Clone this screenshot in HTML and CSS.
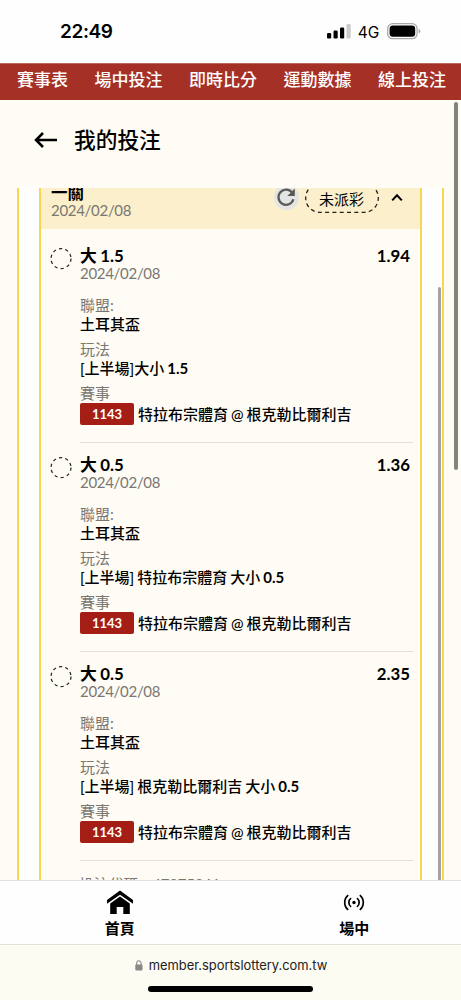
FILE: index.html
```html
<!DOCTYPE html>
<html lang="zh-Hant">
<head>
    <meta charset="UTF-8">
    <meta name="viewport" content="width=device-width, initial-scale=1.0">
    <title>我的投注</title>
    <link rel="stylesheet" href="styles.css">
</head>
<body>
    <div class="status-bar">
        <span class="time">22:49</span>
        <div class="status-icons">
            <svg class="signal" width="24" height="15" viewBox="0 0 24 15">
                <rect x="0" y="9" width="4.2" height="5.5" rx="1.2"/>
                <rect x="6.5" y="6.5" width="4.2" height="8" rx="1.2"/>
                <rect x="13" y="3.5" width="4.2" height="11" rx="1.2"/>
                <rect x="19.5" y="0" width="4.2" height="14.5" rx="1.2" fill="#ccc"/>
            </svg>
            <span class="network">4G</span>
            <svg class="battery" width="34" height="17" viewBox="0 0 34 17">
                <rect x="0.7" y="0.7" width="29.4" height="15" rx="5" fill="none" stroke="#a8a8a8" stroke-width="1.3"/>
                <rect x="2.6" y="2.6" width="25.6" height="11.2" rx="3.3"/>
                <path d="M31.7 5.8q1.6.6 1.6 2.4t-1.6 2.4z" fill="#a8a8a8"/>
            </svg>
        </div>
    </div>

    <nav class="top-nav">
        <a>賽事表</a>
        <a>場中投注</a>
        <a>即時比分</a>
        <a>運動數據</a>
        <a>線上投注</a>
    </nav>

    <div class="page">
        <div class="page-header">
            <svg width="24" height="18" viewBox="0 0 24 18" fill="none" stroke="#000" stroke-width="2.5">
                <path d="M23 9H2.5M9 2L2 9L9 16"/>
            </svg>
            <h1>我的投注</h1>
        </div>

        <div class="list">
            <div class="ticket">
                <div class="ticket-header">
                    <div class="ticket-info">
                        <div class="ticket-type">一關</div>
                        <div class="date">2024/02/08</div>
                    </div>
                    <span class="refresh">
                        <svg width="18" height="18" viewBox="0 0 18 18" fill="none" stroke="#5a5955" stroke-width="2.3">
                            <path d="M15.6 5.2A7.6 7.6 0 1 0 16.4 11.3"/>
                            <path d="M17.8 0.6V8H10.4z" fill="#5a5955" stroke="none"/>
                        </svg>
                    </span>
                    <span class="state">
                        <svg width="74" height="30" viewBox="0 0 74 30" fill="none" stroke="#222" stroke-width="1.3" stroke-dasharray="4 3.3">
                            <rect x="0.7" y="0.7" width="72.6" height="28.6" rx="14"/>
                        </svg>
                        <span class="state-text">未派彩</span>
                    </span>
                    <svg class="chevron" width="12" height="9" viewBox="0 0 12 9" fill="none" stroke="#000" stroke-width="2">
                        <path d="M1.2 7.4L6 2.2L10.8 7.4"/>
                    </svg>
                </div>

                <div class="bet">
                    <svg class="bet-mark" width="22" height="22" viewBox="0 0 22 22"><circle cx="11" cy="10.6" r="10"/></svg>
                    <div class="bet-body">
                        <div class="bet-title"><span>大 1.5</span><span>1.94</span></div>
                        <div class="date">2024/02/08</div>
                        <dl>
                            <dt>聯盟:</dt>
                            <dd>土耳其盃</dd>
                            <dt>玩法</dt>
                            <dd>[上半場]大小 <b>1.5</b></dd>
                            <dt>賽事</dt>
                            <dd class="match"><span class="badge">1143</span>特拉布宗體育 @ 根克勒比爾利吉</dd>
                        </dl>
                    </div>
                </div>

                <div class="bet">
                    <svg class="bet-mark" width="22" height="22" viewBox="0 0 22 22"><circle cx="11" cy="10.6" r="10"/></svg>
                    <div class="bet-body">
                        <div class="bet-title"><span>大 0.5</span><span>1.36</span></div>
                        <div class="date">2024/02/08</div>
                        <dl>
                            <dt>聯盟:</dt>
                            <dd>土耳其盃</dd>
                            <dt>玩法</dt>
                            <dd>[上半場] 特拉布宗體育 大小 <b>0.5</b></dd>
                            <dt>賽事</dt>
                            <dd class="match"><span class="badge">1143</span>特拉布宗體育 @ 根克勒比爾利吉</dd>
                        </dl>
                    </div>
                </div>

                <div class="bet">
                    <svg class="bet-mark" width="22" height="22" viewBox="0 0 22 22"><circle cx="11" cy="10.6" r="10"/></svg>
                    <div class="bet-body">
                        <div class="bet-title"><span>大 0.5</span><span>2.35</span></div>
                        <div class="date">2024/02/08</div>
                        <dl>
                            <dt>聯盟:</dt>
                            <dd>土耳其盃</dd>
                            <dt>玩法</dt>
                            <dd>[上半場] 根克勒比爾利吉 大小 <b>0.5</b></dd>
                            <dt>賽事</dt>
                            <dd class="match"><span class="badge">1143</span>特拉布宗體育 @ 根克勒比爾利吉</dd>
                        </dl>
                    </div>
                </div>

                <div class="bet-code"><span>投注代碼</span><span>47275361</span></div>
            </div>
            <div class="list-scroll"></div>
        </div>
        <div class="page-scroll"></div>
    </div>

    <div class="tab-bar">
        <a class="tab">
            <svg width="28" height="25" viewBox="0 0 28 25">
                <path d="M14 0.5L27 10V13.8L14 4.8L1 13.8V10z"/>
                <path d="M14 6.6L23.8 13.4V24H17.3V17H10.7V24H4.2V13.4z"/>
            </svg>
            <span>首頁</span>
        </a>
        <a class="tab">
            <svg width="22" height="25" viewBox="0 0 22 25" fill="none" stroke="#000" stroke-width="1.7">
                <circle cx="11" cy="12.5" r="1.7" fill="#000" stroke="none"/>
                <path d="M8.1 8.1a5.4 5.4 0 0 0 0 8.8M13.9 8.1a5.4 5.4 0 0 1 0 8.8"/>
                <path d="M5.2 5.1a9.6 9.6 0 0 0 0 14.8M16.8 5.1a9.6 9.6 0 0 1 0 14.8"/>
            </svg>
            <span>場中</span>
        </a>
    </div>

    <div class="browser-bar">
        <div class="address">
            <svg width="8" height="11" viewBox="0 0 8 11">
                <rect x="0.3" y="4.6" width="7.2" height="6" rx="1" fill="#888"/>
                <path d="M1.7 5V3.2a2.2 2.4 0 0 1 4.4 0V5" fill="none" stroke="#888" stroke-width="1.1"/>
            </svg>
            <span>member.sportslottery.com.tw</span>
        </div>
        <div class="home-indicator"></div>
    </div>
</body>
</html>
```
FILE: styles.css
```css
* {
    box-sizing: border-box;
}
body {
    margin: 0;
    height: 1000px;
    display: flex;
    flex-direction: column;
    overflow: hidden;
    font-family: Lato, "Noto Sans CJK TC", sans-serif;
    font-size: 15px;
    color: #000;
    background-color: #fffcf5;
}
svg {
    display: block;
    flex-shrink: 0;
}

/* phone status bar */
.status-bar {
    height: 63px;
    flex-shrink: 0;
    display: flex;
    justify-content: space-between;
    padding: 20px 40px 0 60px;
    background-color: #fefefe;
    font-family: Inter, sans-serif;
}
.time {
    font-size: 19px;
    font-weight: 600;
    line-height: 23px;
    letter-spacing: -0.4px;
}
.status-icons {
    display: flex;
    align-items: center;
    height: 22px;
}
.network {
    font-size: 15.5px;
    margin: 2px 8px 0 7px;
    letter-spacing: -0.2px;
}

.top-nav {
    height: 37px;
    flex-shrink: 0;
    display: flex;
    justify-content: space-between;
    padding: 0 15px 0 17px;
    border-top: 1px solid #b96a61;
    background-color: #a53126;
    color: #fff;
    font-size: 17px;
    font-weight: 500;
    line-height: 32px;
}

.page {
    position: relative;
    flex: 1;
    min-height: 0;
    display: flex;
    flex-direction: column;
}
.page-header {
    height: 88px;
    flex-shrink: 0;
    display: flex;
    align-items: center;
    gap: 16px;
    padding: 0 0 8px 34px;
}
.page-header h1 {
    margin: 0;
    font-size: 21.7px;
    font-weight: 500;
    line-height: 30px;
}

.list {
    position: relative;
    flex: 1;
    min-height: 0;
    overflow: hidden;
    margin: 0 17px;
    padding: 0 20px;
    border-left: 2px solid #f7d74f;
    border-right: 2px solid #f7d74f;
    background-color: #fefefe;
}
.ticket {
    height: 720px;
    border-left: 2px solid #f7d74f;
    border-right: 2px solid #f7d74f;
    background-color: #fffcf5;
}
.ticket-header {
    height: 45px;
    display: flex;
    align-items: flex-start;
    padding: 0 17px 0 10px;
    background: linear-gradient(#fbf0cb 41px, transparent 41px);
}
.ticket-info {
    flex: 1;
}
.ticket-type {
    height: 14px;
    font-size: 16.5px;
    font-weight: 700;
    line-height: 11px;
}
.date {
    height: 16px;
    font-size: 15px;
    line-height: 17px;
    letter-spacing: -0.3px;
    color: #797772;
}
.refresh {
    width: 25px;
    height: 25px;
    margin: -3px 6px 0 0;
    padding: 3px 3px;
    border-radius: 50%;
    background-color: #e4e4e4;
}
.state {
    position: relative;
    width: 74px;
    margin-top: -5px;
}
.state-text {
    position: absolute;
    inset: 0;
    text-align: center;
    text-indent: -1px;
    line-height: 32px;
}
.chevron {
    margin: 5px 0 0 12px;
}

.bet {
    height: 209px;
    display: flex;
    gap: 8px;
    padding: 14px 7px 0 9px;
}
.bet:nth-child(2) {
    margin-top: 1px;
}
.bet-mark {
    fill: none;
    stroke: #222;
    stroke-width: 1.2;
    stroke-dasharray: 3.2 3.2;
}
.bet-body {
    flex: 1;
    border-bottom: 1px solid #e3e1da;
}
.bet-title {
    height: 17px;
    display: flex;
    justify-content: space-between;
    padding-right: 3px;
    font-size: 16.8px;
    font-weight: 700;
    line-height: 16px;
    word-spacing: -0.5px;
}
.bet dl {
    margin: 15px 0 0;
}
.bet dt, .bet dd {
    margin: 0;
    white-space: nowrap;
}
.bet dt {
    height: 19px;
    line-height: 18px;
    color: #797772;
}
.bet dd {
    height: 18px;
    margin-bottom: 7px;
    font-weight: 500;
    line-height: 18px;
    word-spacing: -0.8px;
}
.bet dd.match {
    height: 22px;
    display: flex;
    gap: 4px;
    line-height: 23px;
}
.badge {
    width: 54px;
    border-radius: 2px;
    background-color: #a51e15;
    color: #fff;
    font-size: 13px;
    font-weight: 700;
    text-align: center;
    line-height: 22px;
}
.bet-code {
    display: flex;
    gap: 14px;
    padding: 12px 0 0 38px;
    line-height: 22px;
    letter-spacing: -0.2px;
    color: #797772;
}

/* scroll thumbs lie over the content */
.list-scroll {
    position: absolute;
    top: 99px;
    right: 1px;
    bottom: 0;
    width: 3px;
    border-radius: 2px 2px 0 0;
    background-color: #a2a2a2;
}
.page-scroll {
    position: absolute;
    top: 2px;
    right: 3px;
    width: 4px;
    height: 368px;
    border-radius: 2px;
    background-color: #85837e;
}

.tab-bar {
    height: 65px;
    flex-shrink: 0;
    display: flex;
    border-top: 1px solid #e2e2e0;
    border-bottom: 1px solid #e2e2dc;
    background-color: #fefefe;
}
.tab {
    flex: 1 1 0;
    display: flex;
    flex-direction: column;
    align-items: center;
    padding-top: 9px;
    font-weight: 700;
    line-height: 26px;
}
.tab:first-child {
    padding-left: 13px;
}
.tab:last-child {
    padding-left: 21px;
}

.browser-bar {
    height: 55px;
    flex-shrink: 0;
    display: flex;
    flex-direction: column;
    align-items: center;
    background-color: #fcfcf3;
}
.address {
    display: flex;
    align-items: center;
    gap: 6px;
    height: 41px;
    padding-left: 1px;
    font-family: Inter, sans-serif;
    font-size: 12.9px;
    color: #222;
}
.home-indicator {
    width: 165px;
    height: 6px;
    border-radius: 3px;
    background-color: #000;
}
```
